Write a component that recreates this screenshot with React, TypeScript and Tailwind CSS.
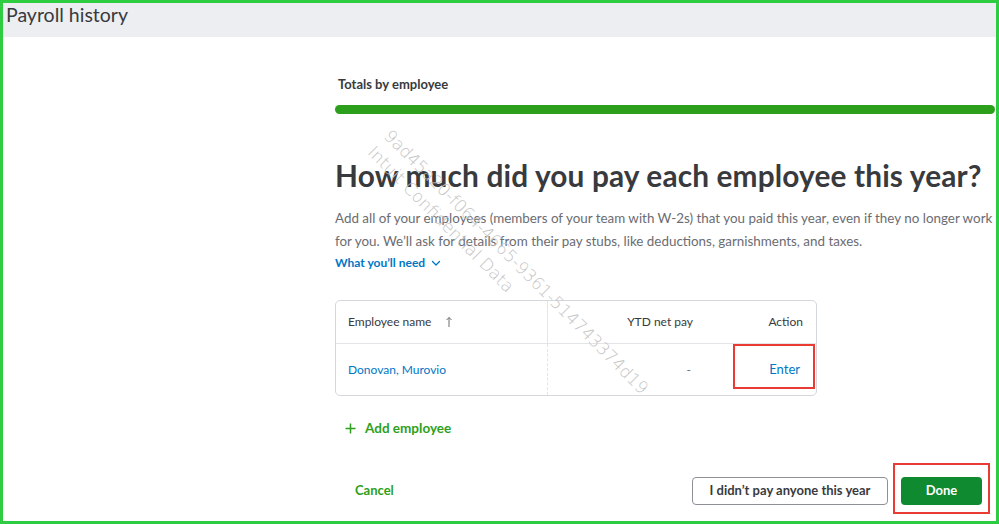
import React from "react";

export default function App() {
  const font = { fontFamily: "Lato, 'Open Sans', sans-serif" };
  return (
    <div
      className="relative w-[999px] h-[524px] overflow-hidden border-[3px] border-[#2ecc40] bg-white flex flex-col"
      style={font}
    >
      <div className="h-[34px] shrink-0 bg-[#eceef1] pl-[3px] pt-[1px] text-[19.5px] text-[#393a3d] leading-[22px]">
        Payroll history
      </div>

      <div className="flex-1 flex flex-col pl-[332px]">
        <div className="pt-[38px] text-[13px] font-bold text-[#393a3d] leading-[18px] pl-[3px]">
          Totals by employee
        </div>
        <div className="mt-[12px] h-[9px] rounded-full bg-[#2ca01c] mr-[1px]" />

        <h1 className="mt-[44px] text-[29.8px] font-bold text-[#393a3d] leading-[36px] whitespace-nowrap tracking-[0.15px]">
          How much did you pay each employee this year?
        </h1>
        <p className="mt-[13px] text-[13.4px] text-[#6b6c72] leading-[23px] whitespace-nowrap">
          Add all of your employees (members of your team with W-2s) that you paid this year, even if they no longer work
          <br />
          for you. We’ll ask for details from their pay stubs, like deductions, garnishments, and taxes.
        </p>
        <div className="mt-[1px] flex items-center gap-[6px] text-[12px] font-bold text-[#0077c5] leading-[18px]">
          What you’ll need
          <svg width="10" height="10" viewBox="0 0 10 10" fill="none">
            <path d="M1.5 3.5 L5 7 L8.5 3.5" stroke="#0077c5" strokeWidth="1.3" strokeLinecap="round" strokeLinejoin="round" />
          </svg>
        </div>

        <div className="mt-[28px] w-[482px] rounded-[5px] border border-[#d4d7dc] text-[12px]">
          <div className="flex h-[43px] border-b border-[#e3e5e8] text-[#393a3d]">
            <div className="w-[212px] border-r border-[#e3e5e8] flex items-center pl-[12px] gap-[14px]">
              <span>Employee name</span>
              <svg width="8" height="12" viewBox="0 0 8 12" fill="none">
                <path d="M4 11 V1.5 M1.5 4 L4 1.5 L6.5 4" stroke="#6b6c72" strokeWidth="1" />
              </svg>
            </div>
            <div className="w-[157px] flex items-center justify-end pr-[12px]">YTD net pay</div>
            <div className="flex-1 flex items-center justify-end pr-[13px]">Action</div>
          </div>
          <div className="flex h-[51px]">
            <div className="w-[212px] border-r border-dashed border-[#e3e5e8] flex items-center pl-[12px] text-[#0077c5]">
              Donovan, Murovio
            </div>
            <div className="w-[157px] flex items-center justify-end pr-[14px] text-[#6b6c72]">-</div>
            <div className="relative flex-1 flex items-center justify-end pr-[16px] text-[13px] text-[#0077c5]">
              Enter
              <div className="absolute left-[28px] top-0 w-[82px] h-[45px] border-[2.5px] border-[#ea3a34]" />
            </div>
          </div>
        </div>

        <div className="mt-[23px] pl-[10px] flex items-center gap-[9px] text-[13.5px] font-bold text-[#2ca01c] leading-[18px]">
          <svg width="11" height="11" viewBox="0 0 11 11" fill="none">
            <path d="M5.5 0.5 V10.5 M0.5 5.5 H10.5" stroke="#2ca01c" strokeWidth="1.5" />
          </svg>
          Add employee
        </div>

        <div className="mt-[40px] flex items-center pr-[14px]">
          <div className="pl-[20px] text-[13px] font-bold text-[#2ca01c]">Cancel</div>
          <div className="flex-1" />
          <div className="h-[28px] w-[196px] rounded-[4px] border border-[#8d9096] flex items-center justify-center text-[13px] font-bold text-[#393a3d]">
            I didn’t pay anyone this year
          </div>
          <div className="relative ml-[13px]">
            <div className="h-[28px] w-[81px] rounded-[4px] bg-[#108a30] flex items-center justify-center text-[13px] font-bold text-white">
              Done
            </div>
            <div className="absolute left-[-8px] top-[-14px] w-[97px] h-[51px] border-[2.5px] border-[#ea3a34]" />
          </div>
        </div>
      </div>

      <div
        className="pointer-events-none absolute left-[392px] top-[122px] origin-top-left rotate-45 text-[17px] leading-[23px] text-[#c4c4c4] whitespace-nowrap"
        style={{ fontFamily: "'DejaVu Sans', sans-serif", fontWeight: 300 }}
      >
        <div>9ad45a20-f064-4665-9361-514743374d19</div>
        <div>Intuit Confidential Data</div>
      </div>
    </div>
  );
}
